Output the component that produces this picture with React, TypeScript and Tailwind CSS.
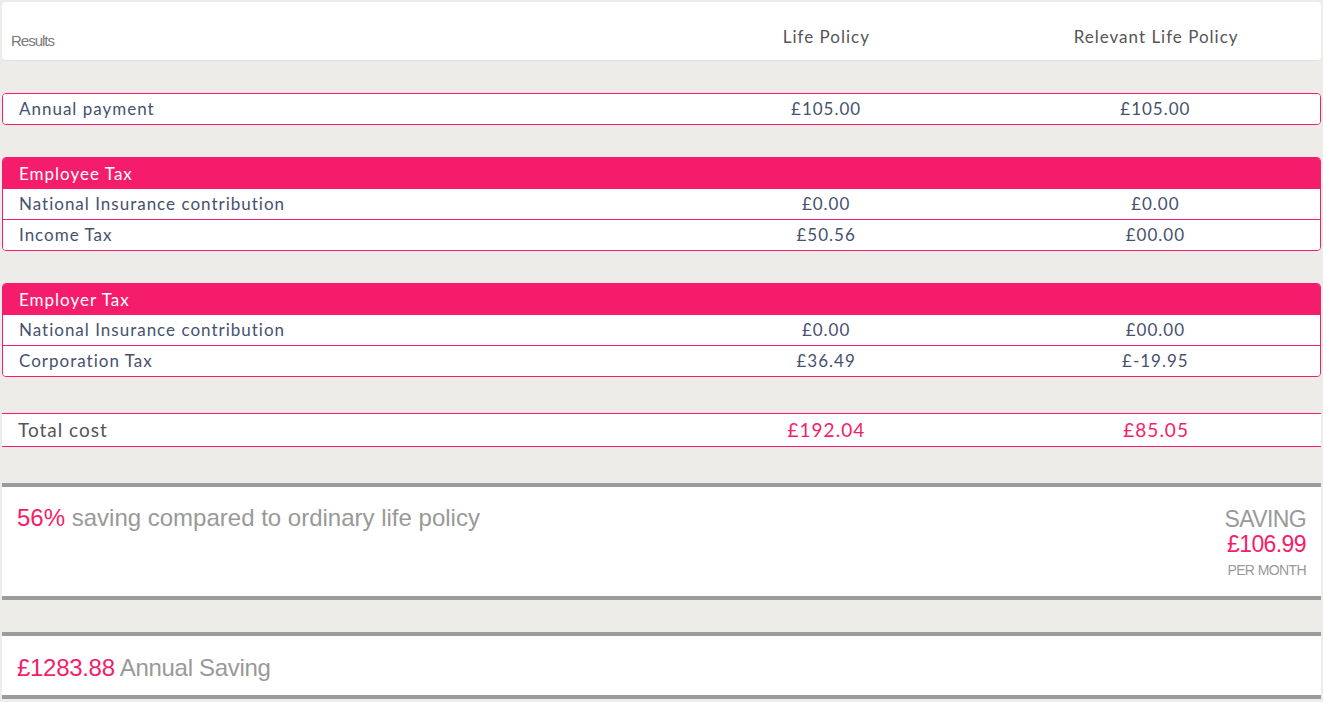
import React from 'react';

const pink = 'text-[#f51d6b]';

type Row = { label: string; life: string; relevant: string };

const Line = ({ row, last }: { row: Row; last?: boolean }) => (
  <div
    className={`grid grid-cols-[2fr_1fr_1fr] items-center bg-white ${last ? 'h-[30px]' : 'h-[31px] border-b border-[#f51d6b]'}`}
  >
    <span className="pl-4">{row.label}</span>
    <span className="text-center">{row.life}</span>
    <span className="text-center">{row.relevant}</span>
  </div>
);

const Group = ({ title, rows }: { title: string; rows: Row[] }) => (
  <div className="mt-[32px] rounded-[4px] border border-[#f51d6b] overflow-hidden">
    <div className="h-[31px] bg-[#f51d6b] text-white pl-4 flex items-center">{title}</div>
    {rows.map((r, i) => (
      <Line key={r.label} row={r} last={i === rows.length - 1} />
    ))}
  </div>
);

const App = () => (
  <div className="min-h-screen bg-[#eeece8] px-[2px] pt-[2px] pb-[3px]">
    <div className="font-['Lato',sans-serif] text-[17px] tracking-[1px] text-[#465170]">
      <div className="grid grid-cols-[2fr_1fr_1fr] h-[59px] bg-white rounded-[4px] border-b border-[#e2e0dc] text-[#555]">
        <span className="pl-[9px] pt-[28px] font-['Liberation_Sans',sans-serif] text-[15px] tracking-[-1px] text-[#7a7a7a]">
          Results
        </span>
        <span className="text-center pt-[22px]">Life Policy</span>
        <span className="text-center pt-[22px]">Relevant Life Policy</span>
      </div>

      <div className="mt-[32px] rounded-[4px] border border-[#f51d6b] overflow-hidden">
        <Line row={{ label: 'Annual payment', life: '£105.00', relevant: '£105.00' }} last />
      </div>

      <Group
        title="Employee Tax"
        rows={[
          { label: 'National Insurance contribution', life: '£0.00', relevant: '£0.00' },
          { label: 'Income Tax', life: '£50.56', relevant: '£00.00' },
        ]}
      />

      <Group
        title="Employer Tax"
        rows={[
          { label: 'National Insurance contribution', life: '£0.00', relevant: '£00.00' },
          { label: 'Corporation Tax', life: '£36.49', relevant: '£-19.95' },
        ]}
      />

      <div className="mt-[36px] grid grid-cols-[2fr_1fr_1fr] h-[34px] items-center bg-white border-y border-[#f51d6b] text-[19px]">
        <span className="pl-4 text-[#555]">Total cost</span>
        <span className={`text-center ${pink}`}>£192.04</span>
        <span className={`text-center ${pink}`}>£85.05</span>
      </div>
    </div>

    <div className="font-['Liberation_Sans',sans-serif] text-[#999]">
      <div className="mt-[36px] h-[117px] bg-white border-y-[4px] border-[#9b9b9b] flex justify-between px-[15px] pt-[17px]">
        <p className="text-[24px] leading-[28px]">
          <span className={pink}>56%</span> saving compared to ordinary life policy
        </p>
        <div className="text-right pt-[3px] tracking-[-0.6px]">
          <p className="text-[23px] leading-[25px]">SAVING</p>
          <p className={`text-[23px] leading-[25px] ${pink}`}>£106.99</p>
          <p className="text-[14px] leading-[26px]">PER MONTH</p>
        </div>
      </div>

      <div className="mt-[32px] h-[67px] bg-white border-y-[4px] border-[#9b9b9b] flex items-center px-[15px] pt-[4px] tracking-[-0.3px]">
        <p className="text-[24px]">
          <span className={pink}>£1283.88</span> Annual Saving
        </p>
      </div>
    </div>
  </div>
);

export default App;
